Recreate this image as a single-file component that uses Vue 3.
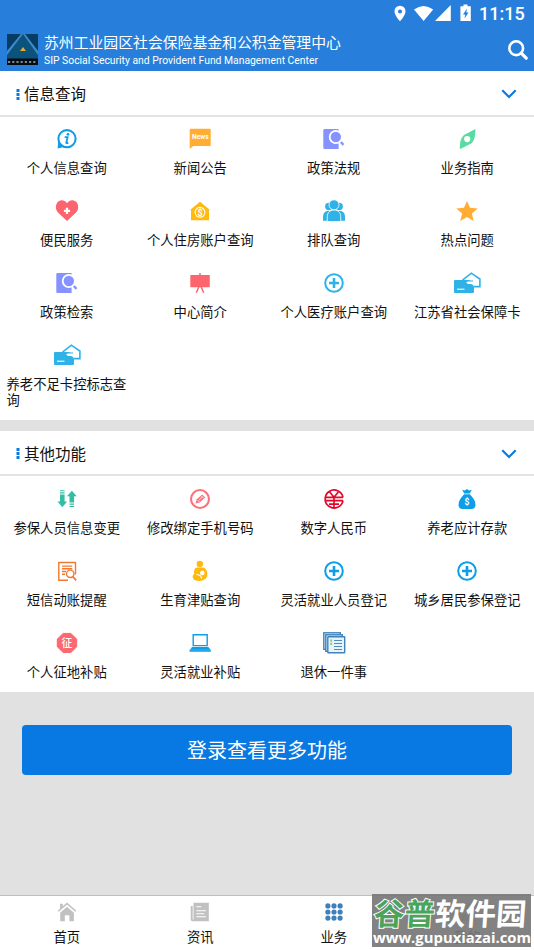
<script setup>
const sections = [
  {
    title: '信息查询',
    items: [
      ['info', '个人信息查询'], ['news', '新闻公告'], ['search-doc', '政策法规'], ['compass', '业务指南'],
      ['heart', '便民服务'], ['house', '个人住房账户查询'], ['people', '排队查询'], ['star', '热点问题'],
      ['search-doc', '政策检索'], ['easel', '中心简介'], ['plus', '个人医疗账户查询', 'sky'], ['card', '江苏省社会保障卡'],
      ['card', '养老不足卡控标志查询'],
    ],
  },
  {
    title: '其他功能',
    items: [
      ['arrows', '参保人员信息变更'], ['pencil', '修改绑定手机号码'], ['yuan', '数字人民币'], ['bag', '养老应计存款'],
      ['sms', '短信动账提醒'], ['mother', '生育津贴查询'], ['plus', '灵活就业人员登记', 'azure'], ['plus', '城乡居民参保登记', 'azure'],
      ['levy', '个人征地补贴'], ['laptop', '灵活就业补贴'], ['files', '退休一件事'],
    ],
  },
]
const tabs = [['home', '首页'], ['paper', '资讯'], ['dots', '业务'], ['user', '我的']]
</script>

<template>
  <div class="screen">
    <svg class="defs" aria-hidden="true">
      <symbol id="info" viewBox="0 0 28 22">
        <path d="M5.2 13.5 4.6 20.4 11 19z" fill="#0d9ee8" />
        <circle cx="14" cy="10.7" r="8.6" fill="#fff" stroke="#0d9ee8" stroke-width="2.1" />
        <circle cx="15" cy="6.3" r="1.4" fill="#0d9ee8" />
        <path d="M11.700 9.200h2.900l-1.300 5.300q-.2 1.100 2 .1" fill="none" stroke="#0d9ee8" stroke-width="1.800" />
      </symbol>
      <symbol id="news" viewBox="0 0 28 22">
        <path d="M5 .7h18.500q1.200 0 1.200 1.200v15q0 1.200-1.200 1.200H7.200L3.700 21V2Q3.700.7 5 .7z" fill="#ffad33" />
        <text x="14.300" y="11.400" text-anchor="middle" font-size="6.700" font-weight="700" fill="#fff">News</text>
      </symbol>
      <symbol id="search-doc" viewBox="0 0 28 22">
        <path d="M4.600 1h14v20h-14q-1.300 0-1.300-1.300V2.300Q3.300 1 4.600 1z" fill="#8592ff" />
        <circle cx="15.800" cy="9" r="7" fill="#fff" />
        <circle cx="15.800" cy="9" r="5.200" fill="#8592ff" />
        <path d="m20.400 13.600 3.100 3.200" stroke="#fff" stroke-width="5" />
        <path d="m20.800 14 2.700 2.900" stroke="#8592ff" stroke-width="2.300" />
      </symbol>
      <symbol id="compass" viewBox="0 0 28 22">
        <path d="M22.400 1Q22.500 12 18.600 15.200L7.300 21q-1-.4-.5-1.700Q7 10.200 11 7z" fill="#59dba4" />
        <circle cx="14.200" cy="11.100" r="3.100" fill="#fff" />
      </symbol>
      <symbol id="heart" viewBox="0 0 28 22">
        <path d="M14 21 5 12.500C2.700 10 2.400 6.500 3.500 4 5.300-.6 11.400-1 14 3.200 16.700-1 22.800-.6 24.600 4c1.100 2.500.7 6-1.600 8.500z" fill="#fc656d" />
        <path d="M14 7.700v6.200M10.900 10.800h6.200" stroke="#fff" stroke-width="2.200" />
      </symbol>
      <symbol id="house" viewBox="0 0 28 22">
        <path d="M14 1.800 24 10h-1v10.300H5V10H4z" fill="#ffb90f" />
        <circle cx="14" cy="12.300" r="4.900" fill="none" stroke="#fff" stroke-width="1.100" />
        <text x="14" y="15.600" text-anchor="middle" font-size="9" font-weight="700" fill="#fff">$</text>
      </symbol>
      <symbol id="people" viewBox="0 0 28 22">
        <g fill="#2fb2e8">
          <circle cx="8.800" cy="6.500" r="3.700" /><circle cx="19.200" cy="6.500" r="3.700" />
          <path d="M3 20.800V17q0-5.200 4-6h14q4 .8 4 6v3.800z" />
        </g>
        <g fill="#2fb2e8" stroke="#fff" stroke-width=".8">
          <path d="M7.300 21.500v-4.800c0-4 2.500-6.700 6.700-6.700s6.700 2.700 6.700 6.700v4.800z" />
          <circle cx="14" cy="4.800" r="5" />
        </g>
      </symbol>
      <symbol id="star" viewBox="0 0 28 22">
        <path d="m14 .9 3 6.900 7.700.7-5.800 5 1.800 7.600-6.700-4-6.700 4 1.800-7.600-5.800-5 7.700-.7z" fill="#ffad33" />
      </symbol>
      <symbol id="easel" viewBox="0 0 28 22">
        <rect x="4.300" y="3" width="19.500" height="12.200" rx=".7" fill="#fc656d" />
        <path d="M14 1v3M13 14.500 10.300 20.800M15 14.500l2.700 6.300" stroke="#fc656d" stroke-width="1.500" />
      </symbol>
      <symbol id="plus" viewBox="0 0 28 22">
        <circle cx="14" cy="11" r="8.800" fill="none" stroke="currentColor" stroke-width="2" />
        <path d="M14 6v10M9 11h10" stroke="currentColor" stroke-width="2.600" />
      </symbol>
      <symbol id="card" viewBox="0 0 28 22">
        <path d="m9.500 8.200 8.800-7L26.900 7v7.600h-6" fill="none" stroke="#2fb2e8" stroke-width="1.600" />
        <path d="M2 7.900h14l1.500.6H20v1h-5.300l-1.500.8 1.600 1.700h3.200q2.800.5 3 3v4.700q0 1.300-1.300 1.300H2q-1 0-1-1V9q0-1.100 1-1.100z" fill="#2fb2e8" />
        <path d="M4 17.200h7.500" stroke="#fff" stroke-width="1.100" />
      </symbol>
      <symbol id="arrows" viewBox="0 0 28 22">
        <g fill="#34bda4">
          <path d="M7 6.500h4.600v7h2.500L9.300 19.300 4.500 13.500H7zM7 2.200h4.600v1H7zM7 4.200h4.600v1.300H7z" />
          <path d="M16.500 14.500v-6.200H14l4.900-5.600 4.800 5.600h-2.600v6.200zM16.500 15.500h4.600v1.300h-4.600zM16.500 17.900h4.600v1h-4.600z" />
        </g>
      </symbol>
      <symbol id="pencil" viewBox="0 0 28 22">
        <circle cx="14" cy="11" r="9" fill="none" stroke="#fc727a" stroke-width="2.100" />
        <path d="m9.600 15.500 1-4 5.600-5 3.100 3-5.700 5z" fill="#fc727a" />
        <path d="m11.500 12 2 2m1.700-6.200 2.700 2.700M13 12l3.500-3.200" stroke="#fff" stroke-width=".7" />
      </symbol>
      <symbol id="yuan" viewBox="0 0 28 22">
        <g fill="none" stroke="#e1092b" stroke-width="1.700">
          <path d="M23 9.400A9 9 0 1 0 23 12.600M5 9.400h18M5 12.600h18M14 8.500V20M9.300 3.500l4.700 5.700 4.700-5.700M9 16.100h10" />
        </g>
      </symbol>
      <symbol id="bag" viewBox="0 0 28 22">
        <g fill="#0d9ee8">
          <path d="m9.200 1.800 2.700.8L14 .9l2.100 1.700 2.700-.8-2 3.700h-5.600z" />
          <path d="M11.200 6.300h5.600C20.500 10 22.500 13 22.500 17q-.3 3.900-4 3.900h-9q-3.700 0-4-3.900c0-4 2-7 5.700-10.700z" />
        </g>
        <text x="14" y="16.800" text-anchor="middle" font-size="8.500" font-weight="700" fill="#fff">$</text>
      </symbol>
      <symbol id="sms" viewBox="0 0 28 22">
        <g fill="none" stroke="#ee7a32" stroke-width="1.400">
          <path d="M15 20.200H5.800V2.500h16.700v12M9 6.100h10.300M9 8.800h10.300M9 11.500h4M9 14.200h3" />
          <circle cx="17.200" cy="13.800" r="3.700" fill="#fff" />
          <path d="m19.800 16.700 3.400 3.600" stroke-width="1.700" />
        </g>
      </symbol>
      <symbol id="mother" viewBox="0 0 28 22">
        <g fill="#ffb90f">
          <circle cx="13.800" cy="3.900" r="3.200" />
          <path d="M11 7.600h5.500q3.500 0 4.800 5 .8 3.300-1.500 6-2.300 2.400-6 2.400-6 0-7-3.200-.4-2.600 1.500-4.400-.7-1-.2-2.500Q9 7.600 11 7.600z" />
        </g>
        <circle cx="16.300" cy="12.900" r="2.300" fill="#fff" />
        <path d="m10.500 14.300 4 1.400 1.300 2.700" fill="none" stroke="#fff" stroke-width="1.100" />
      </symbol>
      <symbol id="levy" viewBox="0 0 28 22">
        <path d="M10.200 1.400h7.600l5.900 5.700v7.700l-5.900 5.700h-7.600l-5.900-5.700V7.100z" fill="#fc6770" stroke="#fc6770" stroke-linejoin="round" />
        <text x="14" y="15" text-anchor="middle" font-size="10.800" font-weight="500" fill="#fff">征</text>
      </symbol>
      <symbol id="laptop" viewBox="0 0 28 22">
        <path d="M7.200 2.800h14v10.800h-14z" fill="none" stroke="#0d9ee8" stroke-width="1.400" />
        <path d="M6 15h16.400l2.400 3.300v1.400H3.700v-1.400z" fill="#0d9ee8" />
        <path d="M3.700 18h21" stroke="#65c3f2" stroke-width=".5" />
      </symbol>
      <symbol id="files" viewBox="0 0 28 22">
        <g fill="#e8f2fb" stroke="#3f83bb" stroke-width="1.400">
          <rect x="3.800" y=".8" width="16.500" height="16.500" />
          <rect x="5.800" y="2.800" width="16.500" height="16.500" />
          <rect x="7.800" y="4.800" width="16.900" height="16" rx=".5" />
        </g>
        <path d="M14 8.500h8M14 11.500h8M14 14.500h8M14 17.500h8" stroke="#4b8cc2" stroke-width="1.100" />
        <path d="M11.200 7.500v5.800" stroke="#8bca83" stroke-width="1.900" stroke-dasharray="2.200 1" />
      </symbol>
      <symbol id="home" viewBox="0 0 28 22">
        <g fill="#c1c1c1">
          <path d="M7.200 11.700 14 5.800l6.900 5.900v8.500h-4.500v-6h-4.600v6H7.200z" />
          <path d="M7 2.700h2.800v3L7 8z" />
        </g>
        <path d="m5.200 10.200 8.800-7.600 8.900 7.600" fill="none" stroke="#c1c1c1" stroke-width="1.500" />
      </symbol>
      <symbol id="paper" viewBox="0 0 28 22">
        <path d="M8.200 1.700h14.600v18.600H6.500q-1.800 0-1.800-1.800V5h2v13.500h.8V1.700z" fill="#c1c1c1" />
        <path d="M10.300 5.700h5M10.300 9.700H20M10.300 12.700h8M10.300 15.700H20" stroke="#fff" stroke-width="1.100" />
      </symbol>
      <symbol id="dots" viewBox="0 0 28 22">
        <path d="M7.900 4.900h0M14 4.900h0M20.100 4.900h0M7.900 11h0M14 11h0M20.100 11h0M7.900 17.100h0M14 17.100h0M20.100 17.100h0" stroke="#4080b9" stroke-width="5.200" stroke-linecap="round" />
      </symbol>
      <symbol id="user" viewBox="0 0 28 22">
        <g fill="#c1c1c1"><circle cx="14" cy="6.500" r="4.500" /><path d="M5.500 20q0-8 8.500-8t8.500 8z" /></g>
      </symbol>
    </svg>

    <header class="header">
      <div class="status">
        <svg class="status-icons" viewBox="0 0 80 20" fill="#fff">
          <path fill-rule="evenodd" d="M8 2.800a5.400 5.400 0 0 0-5.500 5.400C2.500 12.500 8 18.300 8 18.300s5.500-5.800 5.500-10.100A5.400 5.400 0 0 0 8 2.800zm0 3.600a2 2 0 1 1 0 4 2 2 0 0 1 0-4z" />
          <path d="M22 6.500q9.600-7.200 19.200 0l-9.600 11.400zM58.800 1.900v16H43z" />
          <path fill-rule="evenodd" d="M71.500 1.500h4v1.700h3.300v14.700H68.400V3.200h3.100zm3.500 4-4 6h2.200l-.7 4 4-6h-2.200z" />
        </svg>
        <span class="clock">11:15</span>
      </div>
      <div class="brand">
        <svg class="logo" viewBox="0 0 31 31">
          <path d="M0 0h31v31H0z" fill="#0b537c" />
          <path d="M0 0h14L0 17zM31 0H18l13 17z" fill="#073c63" />
          <path d="M0 17 14 0h2L0 21zM31 17 18 0h-2l15 21z" fill="#3c8bcc" />
          <path d="m13 17 3-4 3 4z" fill="#e7ad31" />
          <path d="M0 24.500h31V31H0z" fill="#050b12" />
          <path d="M1 28h29" stroke="#a4b0ba" stroke-width="1.600" stroke-dasharray="2.200 2" />
        </svg>
        <div class="brand-text">
          <div class="brand-name">苏州工业园区社会保险基金和公积金管理中心</div>
          <div class="brand-en">SIP Social Security and Provident Fund Management Center</div>
        </div>
        <svg class="search" viewBox="0 0 20 20" fill="none" stroke="#fff">
          <circle cx="8.200" cy="8.200" r="6.900" stroke-width="2.600" />
          <path d="m13.200 13.200 5 5" stroke-width="3.200" stroke-linecap="round" />
        </svg>
      </div>
    </header>

    <main class="content">
      <section v-for="section in sections" :key="section.title" class="section">
        <div class="section-head">
          <svg class="marker" viewBox="0 0 3 11" fill="#087be2"><path d="M0 0h3v3H0zM0 4h3v3H0zM0 8h3v3H0z" /></svg>
          <h2 class="section-title">{{ section.title }}</h2>
          <svg class="chevron" viewBox="0 0 16 10"><path d="m1.300 1.300 6.700 6.700 6.700-6.700" fill="none" stroke="#087be2" stroke-width="2.200" /></svg>
        </div>
        <div class="grid">
          <div v-for="[icon, label, tone] in section.items" :key="label" class="item">
            <svg class="icon" :class="tone"><use :href="'#' + icon" /></svg>
            <span class="label">{{ label }}</span>
          </div>
        </div>
      </section>
      <button class="login">登录查看更多功能</button>
    </main>

    <nav class="tabs">
      <div v-for="[icon, label] in tabs" :key="icon" class="tab">
        <svg class="icon"><use :href="'#' + icon" /></svg>
        <span class="label">{{ label }}</span>
      </div>
    </nav>

    <div class="watermark">
      <div class="mark-name"><span class="mark-green">谷普</span><span>软件园</span></div>
      <div class="mark-url">www.gupuxiazai.com</div>
    </div>
  </div>
</template>

<style>
body { margin: 0; overflow: hidden; }
</style>

<style scoped>
.screen {
  position: relative;
  display: flex;
  flex-direction: column;
  height: 950px;
  background: #e1e1e1;
  color: #111;
  font-family: Roboto, "Noto Sans CJK SC", sans-serif;
}
.defs { display: none; }
.header { height: 71px; flex: none; background: #277fdb; color: #fff; }
.status { display: flex; justify-content: flex-end; align-items: center; height: 28px; padding-right: 9px; }
.status-icons { width: 80px; height: 20px; margin: -2px 7px 0 0; }
.clock { width: 46px; font-size: 18px; line-height: 28px; font-weight: 500; white-space: nowrap; }
.brand { display: flex; height: 43px; padding: 0 6px 0 7px; }
.logo { width: 31px; height: 31px; margin-top: 6px; flex: none; }
.brand-text { flex: 1; margin-left: 6px; white-space: nowrap; }
.brand-name { margin-top: 5px; font-size: 14.850px; line-height: 21px; }
.brand-en { font-size: 10.370px; line-height: 13px; }
.search { width: 20px; height: 20px; margin-top: 12px; flex: none; }
.content { flex: 1; }
.section { background: #fff; margin-bottom: 11px; }
.section-head {
  display: flex;
  align-items: center;
  box-sizing: border-box;
  height: 46px;
  padding: 2px 17px 0 16px;
  border-bottom: 2px solid #e3e3e3;
}
.section + .section .section-head { height: 45px; margin-bottom: 1px; }
.marker { width: 4px; height: 11px; }
.section-title { flex: 1; margin: 2px 0 0 4px; font-size: 15.500px; line-height: 22px; font-weight: 400; }
.chevron { width: 16px; height: 10px; }
.grid { display: grid; grid-template-columns: repeat(4, 1fr); }
.item { display: flex; flex-direction: column; align-items: center; padding: 11px 6.500px; min-height: 50px; }
.icon { display: block; width: 28px; height: 22px; }
.sky { color: #2fb2e8; }
.azure { color: #0d9ee8; }
.label { font-size: 13.330px; line-height: 16px; }
.item .label { margin-top: 11px; }
.section + .section .grid { height: 215px; }
.login {
  display: block;
  width: calc(100% - 44px);
  height: 50px;
  margin: 33px 22px 0;
  padding: 2px 0 0;
  border: 0;
  border-radius: 4px;
  background: #0878e2;
  color: #fff;
  font-family: inherit;
  font-size: 20px;
  line-height: 48px;
}
.tabs {
  display: grid;
  grid-template-columns: repeat(4, 1fr);
  box-sizing: border-box;
  height: 55px;
  border-top: 1px solid #bebebe;
  background: #fff;
}
.tab { display: flex; flex-direction: column; align-items: center; padding-top: 5px; }
.tab .label { margin-top: 7px; }
.watermark {
  position: absolute;
  left: 372px;
  top: 894px;
  width: 159px;
  height: 53px;
  overflow: hidden;
  background: rgba(119, 119, 119, .92);
  color: #fff;
  white-space: nowrap;
}
.mark-name { display: flex; padding-left: 2px; font-size: 30.500px; line-height: 37px; font-weight: 700; margin-top: 2px; transform: skewX(-4deg); }
.mark-green { color: #4ca45b; -webkit-text-stroke: 2px #fff; paint-order: stroke fill; }
.mark-url { padding-left: 1px; font-family: "Open Sans", sans-serif; font-size: 14.850px; line-height: 16px; font-weight: 700; margin-top: -4px; }
</style>
